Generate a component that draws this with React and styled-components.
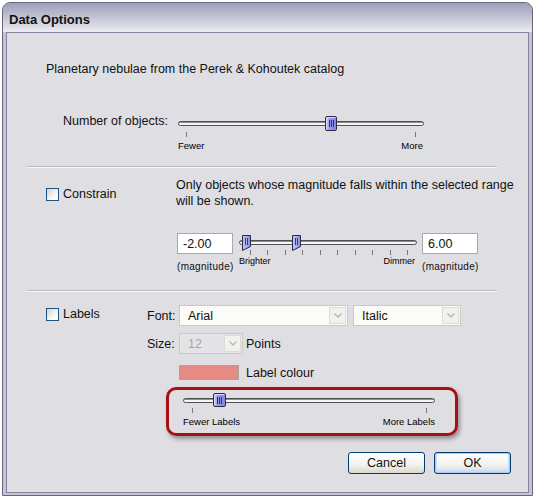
import React from "react";
import styled, { createGlobalStyle } from "styled-components";

const GlobalStyle = createGlobalStyle`
  body {
    margin: 0;
    background: #fff;
    font-family: "Liberation Sans", Arial, sans-serif;
    font-size: 12.5px;
    color: #111;
  }
`;

const Chevron = () => (
  <svg width="8" height="5" viewBox="0 0 8 5">
    <path d="M0.5 0.5 L4 4 L7.5 0.5" fill="none" stroke="#b4b4b0" strokeWidth="1.3" />
  </svg>
);

const RangeThumb = ({ x }) => (
  <RangeThumbBox $x={x}>
    <svg width="9" height="16" viewBox="0 0 9 16">
      <defs>
        <linearGradient id="rt" x1="0" x2="1">
          <stop offset="0" stopColor="#c4c6fa" />
          <stop offset="1" stopColor="#8a8ce6" />
        </linearGradient>
      </defs>
      <path d="M0.5 0.5 H8.5 V11.5 L0.5 15.5 Z" fill="url(#rt)" stroke="#2a2a4a" />
      <path d="M3.5 3 V10 M5.5 3 V10" stroke="#3a3a78" />
    </svg>
  </RangeThumbBox>
);

const Slider = ({ width, height, thumbs, thumbWidth, range, ticks, tickL, tickR, tickGap, labelGap, labelPad, left, right, small }) => (
  <SliderWrap $w={width}>
    <TrackArea $h={height}>
      <Track />
      {range
        ? thumbs.map((x) => <RangeThumb key={x} x={x} />)
        : thumbs.map((x) => (
            <Thumb key={x} $x={x} $w={thumbWidth}>
              <Grip />
              <Grip />
              <Grip />
            </Thumb>
          ))}
    </TrackArea>
    <Ticks $l={tickL} $r={tickR} $mt={tickGap}>
      {Array.from({ length: ticks }).map((_, i) => (
        <Tick key={i} />
      ))}
    </Ticks>
    <SliderLabels $mt={labelGap} $pr={labelPad} $small={small}>
      <span>{left}</span>
      <span>{right}</span>
    </SliderLabels>
  </SliderWrap>
);

const Check = ({ children, top }) => (
  <CheckLabel $mt={top}>
    <CheckBox />
    {children}
  </CheckLabel>
);

const Select = ({ width, value, disabled }) => (
  <SelectBox $w={width} $disabled={disabled}>
    <SelectValue>{value}</SelectValue>
    <ArrowBox>
      <Chevron />
    </ArrowBox>
  </SelectBox>
);

const App = () => {
  return (
    <>
      <GlobalStyle />
      <Frame>
        <TitleBar>Data Options</TitleBar>
        <Panel>
          <Intro>Planetary nebulae from the Perek &amp; Kohoutek catalog</Intro>
          <ObjectsRow>
            <RowLabel>Number of objects:</RowLabel>
            <Slider
              width={246}
              height={15}
              thumbs={[147]}
              thumbWidth={12}
              ticks={2}
              tickL={8}
              tickR={8}
              tickGap={1}
              labelGap={3}
              labelPad={1}
              left="Fewer"
              right="More"
            />
          </ObjectsRow>
          <Separator $mt={15} />

          <OptionSection $left={130} $pt={9}>
            <Check top={11}>Constrain</Check>
            <div>
              <Note>
                Only objects whose magnitude falls within the selected range
                <br />
                will be shown.
              </Note>
              <RangeRow>
                <InputCol>
                  <NumberBox>-2.00</NumberBox>
                  <Caption>(magnitude)</Caption>
                </InputCol>
                <RangeSlider>
                  <Slider
                    width={178}
                    height={15}
                    thumbs={[3, 53]}
                    range
                    ticks={10}
                    tickL={11}
                    tickR={9}
                    tickGap={0}
                    labelGap={1}
                    labelPad={2}
                    small
                    left="Brighter"
                    right="Dimmer"
                  />
                </RangeSlider>
                <InputCol>
                  <NumberBox>6.00</NumberBox>
                  <Caption>(magnitude)</Caption>
                </InputCol>
              </RangeRow>
            </div>
          </OptionSection>
          <Separator $mt={17} />

          <OptionSection $left={101} $pt={0}>
            <Check top={16}>Labels</Check>
            <Fields>
              <FieldRow $gap={5}>
                <FieldLabel>Font:</FieldLabel>
                <Select width={169} value="Arial" />
                <Select width={108} value="Italic" />
              </FieldRow>
              <FieldRow $gap={5} $mt={7}>
                <FieldLabel>Size:</FieldLabel>
                <Select width={64} value="12" disabled />
                <Points>Points</Points>
              </FieldRow>
              <FieldRow $gap={5} $mt={11}>
                <FieldLabel />
                <Swatch />
                <SwatchLabel>Label colour</SwatchLabel>
              </FieldRow>
              <Highlight>
                <Slider
                  width={252}
                  height={14}
                  thumbs={[30]}
                  thumbWidth={13}
                  ticks={2}
                  tickL={9}
                  tickR={8}
                  tickGap={1}
                  labelGap={3}
                  labelPad={0}
                  left="Fewer Labels"
                  right="More Labels"
                />
              </Highlight>
            </Fields>
          </OptionSection>

          <Footer>
            <Button>Cancel</Button>
            <Button $default>OK</Button>
          </Footer>
        </Panel>
      </Frame>
    </>
  );
};

const Frame = styled.div`
  margin: 2px 0 0 2px;
  width: 531px;
  height: 494px;
  box-sizing: border-box;
  border: 1px solid #66667e;
  border-radius: 8px 8px 0 0;
  background: #c4c4d4;
  display: flex;
  flex-direction: column;
  overflow: hidden;
`;

const TitleBar = styled.div`
  flex: none;
  height: 29px;
  box-sizing: border-box;
  padding: 3px 0 0 6px;
  display: flex;
  align-items: center;
  background: linear-gradient(#9e9eb8, #b8b8cc 35%, #dcdce6 80%, #ececf2);
  font-weight: bold;
  font-size: 13px;
  color: #111;
`;

const Panel = styled.div`
  flex: 1;
  margin: 0 3px 2px;
  border: 1px solid #84849c;
  background: #dfdee3;
  display: flex;
  flex-direction: column;
`;

const Intro = styled.div`
  padding: 29px 0 0 39px;
  line-height: 14px;
`;

const ObjectsRow = styled.div`
  display: flex;
  margin: 40px 0 0 56px;
`;

const RowLabel = styled.div`
  width: 115px;
  margin-top: -2px;
  line-height: 15px;
`;

const SliderWrap = styled.div`
  width: ${(p) => p.$w}px;
`;

const TrackArea = styled.div`
  position: relative;
  height: ${(p) => p.$h}px;
  display: flex;
  align-items: center;
`;

const Track = styled.div`
  flex: 1;
  height: 3px;
  border: 1px solid #505050;
  border-radius: 3px;
  background: linear-gradient(#8c8c8c 0 1px, #f6f6f6 1px);
`;

const Thumb = styled.div`
  position: absolute;
  top: 0;
  left: ${(p) => p.$x}px;
  width: ${(p) => p.$w}px;
  height: 100%;
  box-sizing: border-box;
  border: 1px solid #2a2a48;
  border-radius: 2px;
  background: linear-gradient(90deg, #c6c8fb, #9496ec 40%, #8486e0);
  box-shadow: inset 1px 1px 0 #dcdcff;
  display: flex;
  justify-content: center;
  align-items: center;
  gap: 1px;
`;

const Grip = styled.span`
  width: 1px;
  height: 7px;
  background: #2e2e70;
`;

const RangeThumbBox = styled.div`
  position: absolute;
  top: 0;
  left: ${(p) => p.$x}px;
  line-height: 0;
`;

const Ticks = styled.div`
  display: flex;
  justify-content: space-between;
  margin-top: ${(p) => p.$mt}px;
  padding: 0 ${(p) => p.$r}px 0 ${(p) => p.$l}px;
`;

const Tick = styled.span`
  width: 1px;
  height: 5px;
  background: #777;
`;

const SliderLabels = styled.div`
  display: flex;
  justify-content: space-between;
  margin-top: ${(p) => p.$mt}px;
  padding-right: ${(p) => p.$pr}px;
  font-size: ${(p) => (p.$small ? 9 : 9.5)}px;
  line-height: ${(p) => (p.$small ? 10 : 11)}px;
  color: #000;
`;

const Separator = styled.div`
  margin: ${(p) => p.$mt}px 31px 0 20px;
  border-top: 1px solid #bdbbb2;
  border-bottom: 1px solid #fbf8ea;
`;

const OptionSection = styled.div`
  display: grid;
  grid-template-columns: ${(p) => p.$left}px 1fr;
  padding: ${(p) => p.$pt}px 0 0 39px;
`;

const CheckLabel = styled.label`
  display: flex;
  align-items: center;
  gap: 4px;
  align-self: start;
  margin-top: ${(p) => p.$mt}px;
  line-height: 13px;
`;

const CheckBox = styled.span`
  width: 13px;
  height: 13px;
  box-sizing: border-box;
  border: 1px solid #1d5281;
  background: linear-gradient(135deg, #d6d6cf, #fbfbf9 70%, #fff);
`;

const Note = styled.div`
  line-height: 16px;
`;

const RangeRow = styled.div`
  display: flex;
  margin: 24px 0 0 1px;
`;

const InputCol = styled.div`
  width: 56px;
  display: flex;
  flex-direction: column;
`;

const NumberBox = styled.div`
  height: 21px;
  box-sizing: border-box;
  border: 1px solid #a8a8b0;
  background: #fff;
  padding-left: 5px;
  display: flex;
  align-items: center;
`;

const Caption = styled.div`
  margin-top: 7px;
  line-height: 12px;
  font-size: 10px;
  letter-spacing: 0.3px;
  white-space: nowrap;
`;

const RangeSlider = styled.div`
  margin: 2px 5px 0 6px;
`;

const Fields = styled.div`
  padding-top: 13px;
  display: flex;
  flex-direction: column;
`;

const FieldRow = styled.div`
  display: flex;
  align-items: center;
  gap: ${(p) => p.$gap}px;
  margin-top: ${(p) => p.$mt || 0}px;
`;

const FieldLabel = styled.div`
  width: 27px;
  text-align: right;
`;

const SelectBox = styled.div`
  width: ${(p) => p.$w}px;
  height: 21px;
  box-sizing: border-box;
  border: 1px solid #cacac2;
  background: ${(p) => (p.$disabled ? "#e4e4e6" : "#fbfbf8")};
  color: ${(p) => (p.$disabled ? "#a6a6a6" : "#111")};
  display: flex;
  align-items: stretch;
`;

const SelectValue = styled.div`
  flex: 1;
  display: flex;
  align-items: center;
  padding-left: 8px;
`;

const ArrowBox = styled.div`
  width: 15px;
  margin: 1px;
  border: 1px solid #dcdcd6;
  background: #f1f1ed;
  display: flex;
  align-items: center;
  justify-content: center;
`;

const Points = styled.span`
  margin-left: -2px;
`;

const Swatch = styled.div`
  width: 60px;
  height: 15px;
  box-sizing: border-box;
  border: 1px solid #a4a4a4;
  background: #e88a84;
`;

const SwatchLabel = styled.span`
  margin-left: 2px;
`;

const Highlight = styled.div`
  margin: 7px 0 0 19px;
  width: 292px;
  height: 49px;
  box-sizing: border-box;
  border: 3px solid #a80f14;
  border-radius: 10px;
  box-shadow: 2px 3px 4px rgba(0, 0, 0, 0.35);
  padding: 3px 0 0 14px;
`;

const Footer = styled.div`
  margin-top: auto;
  display: flex;
  justify-content: flex-end;
  gap: 9px;
  padding: 0 17px 18px 0;
`;

const Button = styled.button`
  width: 77px;
  height: 22px;
  border: 1px solid #003c74;
  border-radius: 3px;
  background: linear-gradient(#ffffff, #f2f2ee 60%, #dcd8ce);
  font-family: inherit;
  font-size: 12.5px;
  color: #111;
  padding: 0;
  box-shadow: ${(p) =>
    p.$default ? "inset 0 0 0 1px #aecbf4, inset 0 -1px 0 2px #c8dcfa" : "none"};
`;

export default App;
